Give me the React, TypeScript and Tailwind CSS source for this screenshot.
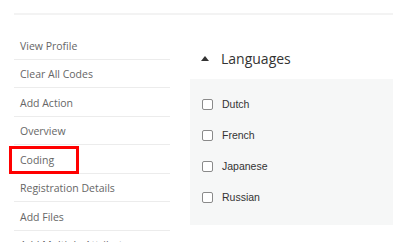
import React from 'react';

const menuItems = [
  'View Profile',
  'Clear All Codes',
  'Add Action',
  'Overview',
  'Coding',
  'Registration Details',
  'Add Files',
  'Add Multiple Attributes',
];

const languages = ['Dutch', 'French', 'Japanese', 'Russian'];

export default function App() {
  return (
    <div className="relative h-[242px] w-[393px] overflow-hidden bg-white pl-[14px] pt-[13px]">
      {/* top rule */}
      <div className="h-[2px] bg-[#f3f3f3]" />

      <div className="mt-[16px] flex gap-[20px]">
        {/* Sidebar menu */}
        <ul className="w-[156px] shrink-0">
          {menuItems.map((item) => (
            <li
              key={item}
              className="flex h-[28.5px] items-center border-b border-[#ececec] pl-[6px] pt-[4px] text-[10.5px] text-[#666] [font-family:'Open_Sans',sans-serif]"
            >
              {item}
            </li>
          ))}
        </ul>

        {/* Languages panel */}
        <section className="flex-1">
          <header className="flex h-[48px] items-center pl-[11px] pt-[6px]">
            <svg width="8" height="5" viewBox="0 0 8 5" className="shrink-0">
              <polygon points="4,0 8,5 0,5" fill="#333" />
            </svg>
            <h2 className="ml-[12px] text-[14px] text-[#333] [font-family:'Open_Sans',sans-serif]">
              Languages
            </h2>
          </header>
          <div className="bg-[#f6f7f7] pb-[12px] pl-[12px] pt-[10px]">
            {languages.map((lang) => (
              <label key={lang} className="flex h-[31px] items-center">
                <span className="h-[11px] w-[11px] shrink-0 rounded-[2px] border border-[#8a8a8a] bg-white" />
                <span className="ml-[9px] text-[10.5px] text-[#333] [font-family:'Liberation_Sans',Arial,sans-serif]">
                  {lang}
                </span>
              </label>
            ))}
          </div>
        </section>
      </div>

      {/* annotation highlight */}
      <div className="absolute left-[9px] top-[146px] h-[28px] w-[70px] border-[3px] border-[#f00]" />
    </div>
  );
}
